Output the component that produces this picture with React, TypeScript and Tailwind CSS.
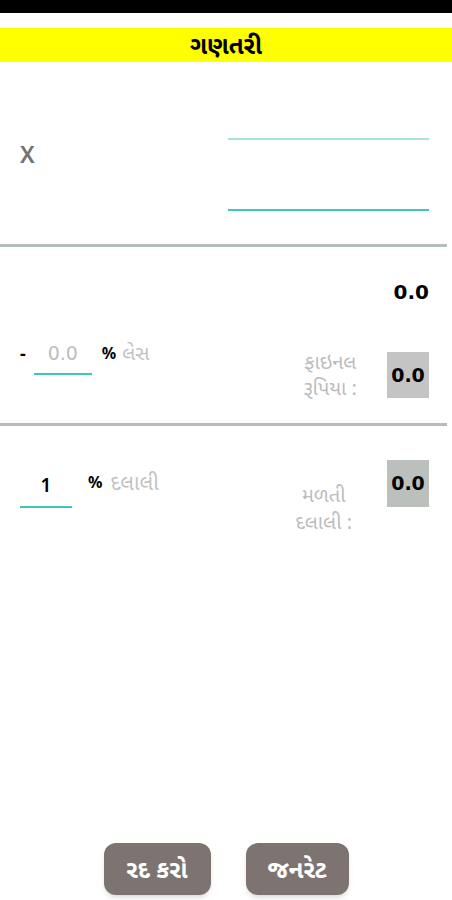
import React from "react";

const font = { fontFamily: '"Noto Sans", "Noto Sans Gujarati", "Lohit Gujarati", sans-serif' };
const num = { fontFamily: '"DejaVu Sans", "Noto Sans", sans-serif' };

const App = () => {
	return (
		<div className="flex h-[900px] w-[452px] flex-col bg-white" style={font}>
			<div className="h-[13px] bg-black" />
			<div className="h-[15px]" />
			<div className="flex h-[34px] items-center justify-center bg-[#ffff00] text-[24px] font-bold leading-[34px] text-black">
				ગણતરી
			</div>

			{/* amount inputs */}
			<div className="flex h-[182px] items-center pl-[20px] pr-[23px]">
				<span className="mt-[2px] text-[23px] font-semibold text-[#727272]">X</span>
				<div className="mb-[7px] ml-auto flex w-[201px] flex-col gap-[19px]">
					<div className="h-[52px] border-b-2 border-[#a9e2db]" />
					<div className="h-[52px] border-b-2 border-[#3cc6bd]" />
				</div>
			</div>
			<div className="h-[3px] w-[447px] bg-[#b5bdb9]" />

			{/* less */}
			<div className="flex h-[176px] flex-col pt-[32px]">
				<div className="pr-[23px] text-right text-[20px] font-bold leading-[26px] text-black" style={num}>0.0</div>
				<div className="mt-[33px] flex items-start justify-between pr-[23px]">
					<div className="flex items-start pl-[20px]">
						<span className="text-[18px] font-bold leading-[30px] text-black">-</span>
						<div className="ml-[8px] flex h-[37px] w-[58px] items-start justify-center border-b-2 border-[#3cc6bd] text-[19px] leading-[30px] text-[#bdbdbd]" style={num}>
							0.0
						</div>
						<span className="ml-[10px] text-[16px] font-bold leading-[30px] text-black">%</span>
						<span className="ml-[6px] text-[20px] leading-[30px] text-[#c2c2c2]">લેસ</span>
					</div>
					<div className="mt-[11px] flex items-center gap-[30px]">
						<div className="text-center text-[20px] leading-[26px] text-[#bcbcbc]">
							ફાઇનલ
							<br />
							રૂપિયા :
						</div>
						<div className="flex h-[46px] w-[42px] items-center justify-center bg-[#c4c4c4] text-[19px] font-bold text-black" style={num}>
							0.0
						</div>
					</div>
				</div>
			</div>
			<div className="h-[3px] w-[447px] bg-[#b5bdb9]" />

			{/* brokerage */}
			<div className="flex items-start justify-between pr-[23px] pt-[34px]">
				<div className="mt-[5px] flex items-start pl-[20px]">
					<div className="flex h-[43px] w-[52px] items-start justify-center border-b-2 border-[#3cc6bd] pt-[5px] text-[19px] font-semibold leading-[30px] text-black">
						1
					</div>
					<span className="ml-[16px] pt-[2px] text-[16px] font-bold leading-[30px] text-black">%</span>
					<span className="ml-[8px] pt-[2px] text-[21px] leading-[30px] text-[#c2c2c2]">દલાલી</span>
				</div>
				<div className="flex items-start gap-[35px]">
					<div className="mt-[21px] text-center text-[20px] leading-[27px] text-[#bcbcbc]">
						મળતી
						<br />
						દલાલી :
					</div>
					<div className="flex h-[47px] w-[42px] items-center justify-center bg-[#bcc0bc] text-[19px] font-bold text-black" style={num}>
						0.0
					</div>
				</div>
			</div>

			<div className="flex-1" />
			<div className="mb-[5px] flex justify-center gap-[35px]">
				<button className="h-[52px] w-[107px] rounded-[12px] bg-[#7d7472] text-[24px] font-bold text-white shadow-md">
					રદ કરો
				</button>
				<button className="h-[52px] w-[103px] rounded-[12px] bg-[#7d7472] text-[24px] font-bold text-white shadow-md">
					જનરેટ
				</button>
			</div>
		</div>
	);
};

export default App;
